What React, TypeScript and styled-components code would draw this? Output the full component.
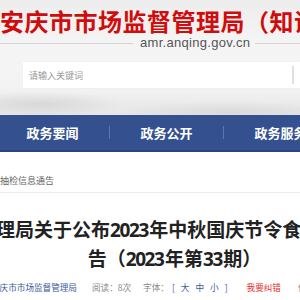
import styled, { createGlobalStyle } from "styled-components";

const GlobalStyle = createGlobalStyle`
    html, body {
        margin: 0;
        padding: 0;
        background: #fff;
    }
    body {
        font-family: "Noto Sans CJK SC", "Liberation Sans", sans-serif;
    }
`;

const Page = styled.div`
    width: 300px;
    height: 300px;
    overflow: hidden;
    background: #fff;
`;

const Header = styled.header`
    height: 115px;
    background:
        radial-gradient(ellipse 120px 18px at 40px 104px, rgba(200,200,200,0.55), rgba(200,200,200,0) 70%),
        radial-gradient(ellipse 160px 16px at 230px 112px, rgba(205,205,205,0.5), rgba(205,205,205,0) 70%),
        linear-gradient(180deg, #ededed 0%, #f5f5f5 40%, #f3f3f3 75%, #e6e6e6 100%);
    overflow: hidden;
`;

const SiteTitle = styled.h1`
    margin: 0;
    padding-top: 7px;
    font-size: 24px;
    line-height: 28px;
    font-weight: 700;
    letter-spacing: 0.5px;
    color: #d00c0c;
    white-space: nowrap;
`;

const UrlRow = styled.div`
    display: flex;
    align-items: center;
    height: 14px;
    margin-top: 1px;
`;

const UrlLine = styled.div<{ $w?: number }>`
    height: 1px;
    background: #d3d3d3;
    flex: ${p => (p.$w ? `0 0 ${p.$w}px` : "1")};
`;

const UrlText = styled.span`
    font-family: "Liberation Sans", sans-serif;
    font-size: 13px;
    line-height: 14px;
    letter-spacing: 0.3px;
    color: #555;
    margin: 0 5px 0 7px;
    white-space: nowrap;
`;

const SearchBox = styled.div`
    margin: 12px 0 0 23px;
    height: 26px;
    background: #fff;
    display: flex;
    align-items: center;
    padding-left: 6px;
    box-shadow: 0 0 2px rgba(0,0,0,0.04);
`;

const Placeholder = styled.span`
    font-size: 9px;
    color: #9a9a9a;
    flex: 1;
`;

const SearchDivider = styled.div`
    width: 2px;
    height: 18px;
    background: #dedfe8;
    margin-right: 6px;
`;

const Nav = styled.nav`
    height: 35px;
    background: #34508f;
    border-bottom: 2px solid #2a4480;
    display: flex;
    align-items: center;
    margin-left: -4px;
`;

const NavItem = styled.div`
    flex: 0 0 113px;
    text-align: center;
    color: #fff;
    font-size: 13px;
    font-weight: 700;
    white-space: nowrap;
`;

const NavDivider = styled.div`
    flex: 0 0 1px;
    height: 13px;
    background: rgba(255,255,255,0.22);
`;

const Crumb = styled.div`
    padding: 23px 0 5px;
    font-size: 9px;
    line-height: 12px;
    color: #666;
    border-bottom: 1px solid #ebebeb;
    white-space: nowrap;
`;

const Article = styled.div`
    margin-top: 22px;
`;

const TitleLine = styled.div<{ $center?: boolean }>`
    font-size: 19px;
    line-height: 27px;
    font-weight: 700;
    color: #222;
    white-space: nowrap;
    margin-left: ${p => (p.$center ? "0" : "-23px")};
    padding-left: ${p => (p.$center ? "49px" : "0")};
    text-align: ${p => (p.$center ? "center" : "left")};
`;

const Num = styled.span`
    font-family: "Noto Sans", "Liberation Sans", sans-serif;
    letter-spacing: -1.4px;
    margin-right: 1.4px;
`;

const Meta = styled.div`
    margin-top: 8px;
    display: flex;
    align-items: center;
    height: 12px;
    font-size: 8.6px;
    color: #888;
    white-space: nowrap;
    margin-left: -9px;
`;

const MetaItem = styled.span<{ $ml?: number; $color?: string }>`
    margin-left: ${p => p.$ml || 0}px;
    color: ${p => p.$color || "#888"};
`;

const SizeLink = styled.span`
    color: #3a5a9c;
    margin: 0 3px;
`;

export default function App() {
    return (
        <>
            <GlobalStyle />
            <Page>
                <Header>
                    <SiteTitle>安庆市市场监督管理局（知识产权局）</SiteTitle>
                    <UrlRow>
                        <UrlLine $w={133} />
                        <UrlText>amr.anqing.gov.cn</UrlText>
                        <UrlLine />
                    </UrlRow>
                    <SearchBox>
                        <Placeholder>请输入关键词</Placeholder>
                        <SearchDivider />
                    </SearchBox>
                </Header>
                <Nav>
                    <NavItem>政务要闻</NavItem>
                    <NavDivider />
                    <NavItem>政务公开</NavItem>
                    <NavDivider />
                    <NavItem>政务服务</NavItem>
                </Nav>
                <Crumb>抽检信息通告</Crumb>
                <Article>
                    <TitleLine>管理局关于公布<Num>2023</Num>年中秋国庆节令食品安全</TitleLine>
                    <TitleLine $center>告（<Num>2023</Num>年第<Num>33</Num>期）</TitleLine>
                    <Meta>
                        <MetaItem $color="#3a5a9c">安庆市市场监督管理局</MetaItem>
                        <MetaItem $ml={15}>阅读：8次</MetaItem>
                        <MetaItem $ml={12}>
                            字体：<SizeLink>[</SizeLink>
                            <SizeLink>大</SizeLink>
                            <SizeLink>中</SizeLink>
                            <SizeLink>小</SizeLink>
                            <SizeLink>]</SizeLink>
                        </MetaItem>
                        <MetaItem $ml={16} $color="#e52b2b">我要纠错</MetaItem>
                        <MetaItem $ml={17}>保护视力色</MetaItem>
                    </Meta>
                </Article>
            </Page>
        </>
    );
}
